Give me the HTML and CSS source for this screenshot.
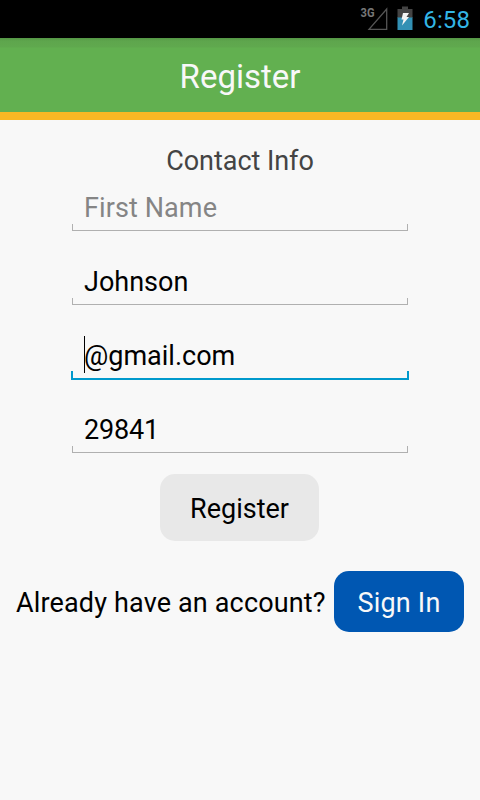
FILE: index.html
```html
<!DOCTYPE html>
<html lang="en">
<head>
<meta charset="utf-8">
<title>Register</title>
<link rel="stylesheet" href="styles.css">
</head>
<body>
<div class="status">
  <svg class="signal" width="30" height="38" viewBox="0 0 30 38"><path d="M9 29.300H26.700V9Z" fill="none" stroke="#555" stroke-width="1.300"/><text x="0.500" y="17" class="net" textLength="14" lengthAdjust="spacingAndGlyphs">3G</text></svg>
  <svg class="battery" width="16" height="38" viewBox="0 0 16 38"><path d="M0.500 17h15v13h-15z" fill="#3290b4"/><path d="M5 6.500h6V9h4.500v8.500h-15V9H5z" fill="#444"/><path d="M6 13h6l-2.500 4H12l-7 8.500 1.500-6H4.500z" fill="#f4f4f4"/></svg>
  <span class="clock">6:58</span>
</div>
<header class="bar"><span class="title">Register</span></header>
<main class="page">
  <h2 class="heading"><span>Contact Info</span></h2>
  <form class="form">
    <div class="field hint"><span>First Name</span></div>
    <div class="field"><span>Johnson</span></div>
    <div class="field active"><i class="caret"></i><span>@gmail.com</span></div>
    <div class="field zip"><span>29841</span></div>
    <button type="button" class="register"><span>Register</span></button>
  </form>
  <div class="account"><span class="question">Already have an account?</span><button type="button" class="signin"><span>Sign In</span></button></div>
</main>
</body>
</html>
```
FILE: styles.css
```css
* { box-sizing: border-box; }
body { margin: 0; width: 480px; height: 800px; overflow: hidden; background: #f8f8f8; color: #000; font: 27px/32px Roboto, sans-serif; }
button { border: 0; padding: 0; font: inherit; }
.status { height: 38px; background: #000; display: flex; justify-content: flex-end; padding-right: 10px; }
.signal { margin-right: 7px; }
.net { font: bold 12px Roboto, sans-serif; fill: #777; }
.battery { margin-right: 10px; }
.clock { width: 47px; color: #33b5e5; font-size: 24px; line-height: 40px; text-align: right; letter-spacing: 0.1px; }
.bar { height: 82px; padding-top: 4px; background: linear-gradient(#549645, #5ea64d 3px, #60a94e 9px, #62b050 10px); border-bottom: 8px solid #f9b824; display: flex; justify-content: center; align-items: center; color: #f8f8f8; font-size: 33px; line-height: 40px; }
.page { padding-top: 25px; }
.heading { margin: 0; font-size: 27px; font-weight: 400; line-height: 32px; color: #444; text-align: center; letter-spacing: -0.05px; }
.form { display: flex; flex-direction: column; align-items: center; }
.field { width: 336px; height: 54px; margin-bottom: 20px; padding: 15px 12px 0; position: relative; }
.field::after { content: ""; position: absolute; left: 0; right: 0; bottom: 0; height: 6px; border: 1px solid #b0b0b0; border-top: 0; }
.hint { color: #858585; letter-spacing: 0.1px; }
.zip { letter-spacing: -0.2px; }
.active::after { left: -1px; right: -1px; bottom: -1px; height: 7px; border: 2px solid #0099cc; border-top: 0; }
.caret { position: absolute; left: 12px; top: 11px; width: 1px; height: 37px; background: #000; }
.register { width: 159px; height: 67px; margin: 1px 1px 0 0; padding-top: 2px; border-radius: 15px; background: #e8e8e8; color: #000; }
.account { display: flex; align-items: center; justify-content: space-between; padding: 0 16px; margin-top: 30px; }
.question { padding-top: 2px; letter-spacing: 0.150px; white-space: nowrap; }
.signin { width: 130px; height: 61px; padding-top: 2px; border-radius: 15px; background: #0057b2; color: #f8f8f8; letter-spacing: 0.2px; }
```
